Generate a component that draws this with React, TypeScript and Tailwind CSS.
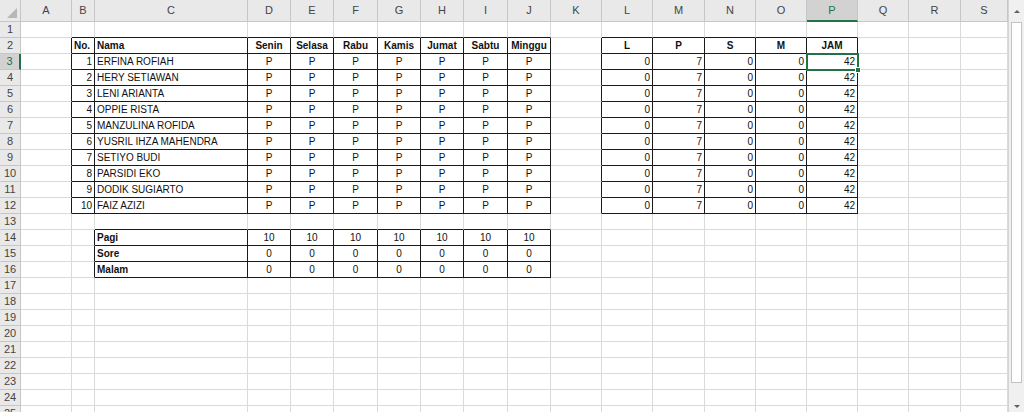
import React from "react";

type Col = { key: string; w: number };

const cols: Col[] = [
  { key: "A", w: 51 },
  { key: "B", w: 23 },
  { key: "C", w: 153 },
  { key: "D", w: 43 },
  { key: "E", w: 43 },
  { key: "F", w: 44 },
  { key: "G", w: 43 },
  { key: "H", w: 43 },
  { key: "I", w: 44 },
  { key: "J", w: 43 },
  { key: "K", w: 51 },
  { key: "L", w: 51 },
  { key: "M", w: 52 },
  { key: "N", w: 51 },
  { key: "O", w: 51 },
  { key: "P", w: 51 },
  { key: "Q", w: 51 },
  { key: "R", w: 52 },
  { key: "S", w: 47 },
];

const names = [
  "ERFINA ROFIAH",
  "HERY SETIAWAN",
  "LENI ARIANTA",
  "OPPIE RISTA",
  "MANZULINA ROFIDA",
  "YUSRIL IHZA MAHENDRA",
  "SETIYO BUDI",
  "PARSIDI EKO",
  "DODIK SUGIARTO",
  "FAIZ AZIZI",
];

const days = ["Senin", "Selasa", "Rabu", "Kamis", "Jumat", "Sabtu", "Minggu"];
const dayCols = ["D", "E", "F", "G", "H", "I", "J"];
const sumCols = ["L", "M", "N", "O", "P"];

type Cell = { text: string; align: "left" | "center" | "right"; bold?: boolean };

const getCell = (row: number, col: string): Cell | null => {
  if (row === 2) {
    if (col === "B") return { text: "No.", align: "left", bold: true };
    if (col === "C") return { text: "Nama", align: "left", bold: true };
    const d = dayCols.indexOf(col);
    if (d >= 0) return { text: days[d], align: "center", bold: true };
    const s = sumCols.indexOf(col);
    if (s >= 0) return { text: ["L", "P", "S", "M", "JAM"][s], align: "center", bold: true };
  }
  if (row >= 3 && row <= 12) {
    if (col === "B") return { text: String(row - 2), align: "right" };
    if (col === "C") return { text: names[row - 3], align: "left" };
    if (dayCols.includes(col)) return { text: "P", align: "center" };
    const s = sumCols.indexOf(col);
    if (s >= 0) return { text: ["0", "7", "0", "0", "42"][s], align: "right" };
  }
  if (row >= 14 && row <= 16) {
    if (col === "C") return { text: ["Pagi", "Sore", "Malam"][row - 14], align: "left", bold: true };
    if (dayCols.includes(col)) return { text: row === 14 ? "10" : "0", align: "center" };
  }
  return null;
};

const colIdx = (c: string) => cols.findIndex((x) => x.key === c);

// is the cell inside one of the bordered tables
const inTable = (row: number, ci: number) => {
  if (ci < 0) return false;
  const c = cols[ci]?.key;
  if (!c) return false;
  const i = colIdx(c);
  if (row >= 2 && row <= 12 && i >= colIdx("B") && i <= colIdx("J")) return true;
  if (row >= 2 && row <= 12 && i >= colIdx("L") && i <= colIdx("P")) return true;
  if (row >= 14 && row <= 16 && i >= colIdx("C") && i <= colIdx("J")) return true;
  return false;
};

const rows = Array.from({ length: 25 }, (_, i) => i + 1);

export default function App() {
  return (
    <div
      className="flex h-[412px] w-[1024px] overflow-hidden bg-white text-[10px] text-[#111]"
      style={{ fontFamily: '"Liberation Sans", Arial, sans-serif' }}
    >
      <div className="relative w-[1008px] overflow-hidden">
        {/* column headers */}
        <div className="flex h-[22px] bg-[#e9e9e9]">
          <div className="flex h-[22px] w-[21px] shrink-0 items-end justify-end border-r border-b border-[#c6c6c6] p-[3px]">
            <svg width="10" height="10" viewBox="0 0 10 10">
              <polygon points="10,0 10,10 0,10" fill="#b7b7b7" />
            </svg>
          </div>
          {cols.map((c) => (
            <div
              key={c.key}
              style={{ width: c.w }}
              className={`flex h-[22px] shrink-0 items-center justify-center border-r text-[11px] ${
                c.key === "P"
                  ? "border-b-2 border-r-[#c6c6c6] border-b-[#217346] bg-[#d2d2d2] text-[#217346]"
                  : "border-b border-[#c6c6c6] text-[#444]"
              }`}
            >
              {c.key}
            </div>
          ))}
        </div>

        {rows.map((r) => (
          <div key={r} className="flex h-4">
            <div
              className={`flex h-4 w-[21px] shrink-0 items-center justify-center border-b border-b-[#c6c6c6] text-[11px] ${
                r === 3
                  ? "border-r-2 border-r-[#217346] bg-[#d2d2d2] text-[#217346]"
                  : "border-r border-r-[#c6c6c6] bg-[#e9e9e9] text-[#444]"
              }`}
            >
              {r}
            </div>
            {cols.map((c, ci) => {
              const cell = getCell(r, c.key);
              const rightBlack = inTable(r, ci) || inTable(r, ci + 1);
              const bottomBlack = inTable(r, ci) || inTable(r + 1, ci);
              return (
                <div
                  key={c.key}
                  style={{ width: c.w }}
                  className={`flex h-4 shrink-0 items-end overflow-visible whitespace-nowrap border-r border-b px-[2px] leading-[14px] ${
                    rightBlack ? "border-r-[#1a1a1a]" : "border-r-[#dadada]"
                  } ${bottomBlack ? "border-b-[#1a1a1a]" : "border-b-[#dadada]"} ${
                    cell?.align === "center"
                      ? "justify-center"
                      : cell?.align === "right"
                      ? "justify-end"
                      : "justify-start"
                  } ${cell?.bold ? "font-bold" : ""}`}
                >
                  {cell?.text}
                </div>
              );
            })}
          </div>
        ))}

        {/* selected cell P3 */}
        <div className="pointer-events-none absolute left-[806px] top-[53px] h-[18px] w-[53px] border-2 border-[#217346]">
          <div className="absolute -right-[4px] -bottom-[4px] h-[6px] w-[6px] border border-white bg-[#217346]" />
        </div>
      </div>

      {/* vertical scrollbar */}
      <div className="flex w-4 flex-col border-l border-[#d4d4d4] bg-[#f0f0f0]">
        <div className="flex h-[22px] items-center justify-center">
          <div className="h-0 w-0 border-x-[3px] border-b-[3px] border-x-transparent border-b-[#606060]" />
        </div>
        <div className="mx-[2px] h-[361px] border border-[#c2c2c2] bg-white" />
        <div className="flex-1" />
        <div className="flex h-[12px] items-center justify-center">
          <div className="h-0 w-0 border-x-[3px] border-t-[3px] border-x-transparent border-t-[#606060]" />
        </div>
      </div>
    </div>
  );
}
